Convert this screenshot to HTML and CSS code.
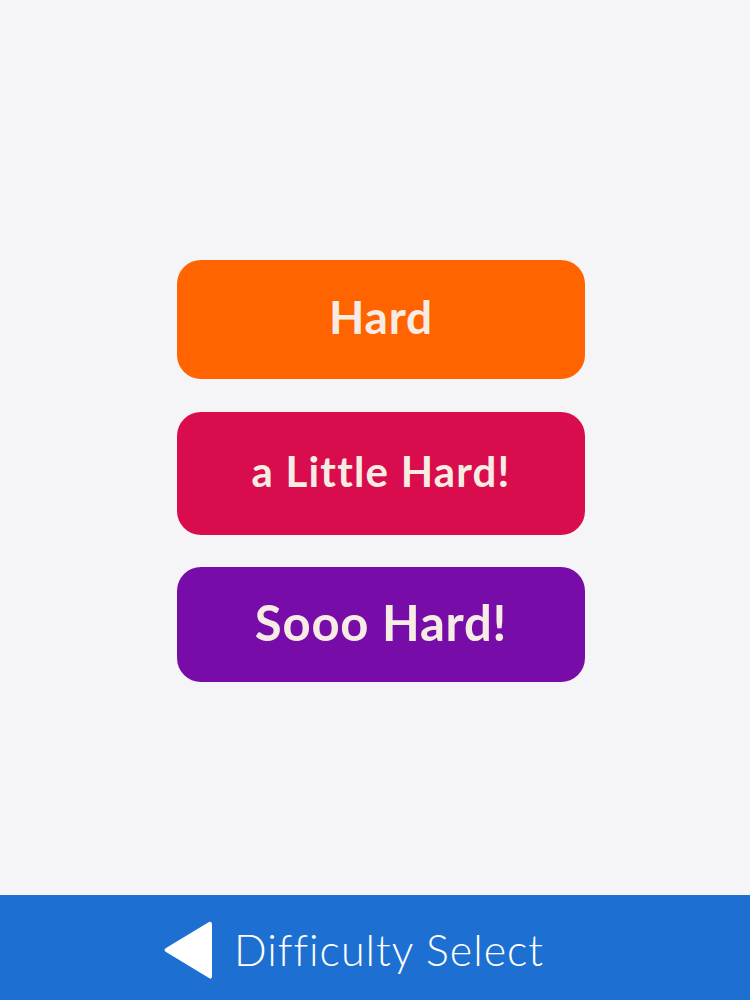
FILE: index.html
```html
<!DOCTYPE html>
<html>
<head>
<meta charset="utf-8">
<link rel="stylesheet" href="styles.css">
</head>
<body>
<div class="screen">
  <main class="choices">
    <div class="btn btn-hard"><span>Hard</span></div>
    <div class="btn btn-little"><span>a Little Hard!</span></div>
    <div class="btn btn-sooo"><span>Sooo Hard!</span></div>
  </main>
  <footer class="bar">
    <div class="back">
      <svg class="tri" width="50" height="60" viewBox="0 0 50 60">
        <path d="M46 2 Q49 1 49 5 L49 56 Q49 60 46 58 L3 32 Q0 30 3 28 Z" fill="#ffffff"/>
      </svg>
      <span class="title">Difficulty Select</span>
    </div>
  </footer>
</div>
</body>
</html>
```
FILE: styles.css
```css
html, body {
  margin: 0;
  padding: 0;
}
body {
  background: #f5f5f7;
  font-family: "Lato", "Open Sans", sans-serif;
}
.screen {
  width: 750px;
  height: 1000px;
  display: flex;
  flex-direction: column;
}
.choices {
  flex: 1;
  display: flex;
  flex-direction: column;
  align-items: center;
  padding-top: 260px;
  padding-left: 12px;
}
.btn {
  width: 408px;
  border-radius: 24px;
  display: flex;
  align-items: center;
  justify-content: center;
  color: #f7ece4;
  font-weight: 700;
  box-sizing: border-box;
  padding-bottom: 6px;
}
.btn-hard {
  height: 119px;
  background: #ff6400;
  font-size: 46px;
  letter-spacing: 0.8px;
}
.btn-little {
  height: 123px;
  margin-top: 33px;
  background: #d90d4e;
  font-size: 42px;
  letter-spacing: 1.2px;
}
.btn-sooo {
  height: 115px;
  margin-top: 32px;
  background: #780ca8;
  font-size: 49px;
  letter-spacing: 0.8px;
}
.bar {
  height: 105px;
  background: #1d6fd1;
  display: flex;
  align-items: center;
  justify-content: flex-start;
  padding-left: 163px;
}
.back {
  display: flex;
  align-items: center;
  gap: 21px;
  margin-top: 4px;
}
.tri {
  display: block;
}
.title {
  color: #ffffff;
  font-weight: 300;
  font-size: 43px;
  letter-spacing: 1px;
}
```
